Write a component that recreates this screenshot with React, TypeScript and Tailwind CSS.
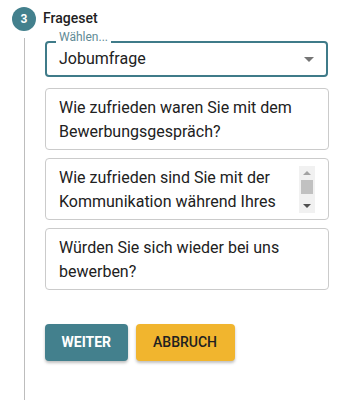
import { useState } from 'react'

const questions = [
  'Wie zufrieden waren Sie mit dem Bewerbungsgespräch?',
  'Wie zufrieden sind Sie mit der Kommunikation während Ihres Bewerbungsprozesses?',
  'Würden Sie sich wieder bei uns bewerben?',
]

// classic scrollbar look, drawn since the headless page hides real ones
function FakeScrollbar() {
  return (
    <div className="w-[16px] h-[47px] bg-[#f1f1f1] flex flex-col items-center shrink-0">
      <div className="h-[14px] flex items-center justify-center">
        <div className="w-0 h-0 border-l-[4px] border-r-[4px] border-b-[4px] border-l-transparent border-r-transparent border-b-[#a3a3a3]" />
      </div>
      <div className="w-[12px] h-[14px] bg-[#c1c1c1]" />
      <div className="flex-1" />
      <div className="h-[14px] flex items-center justify-center">
        <div className="w-0 h-0 border-l-[4px] border-r-[4px] border-t-[4px] border-l-transparent border-r-transparent border-t-[#505050]" />
      </div>
    </div>
  )
}

function QuestionCard({ text, scroll }: { text: string; scroll?: boolean }) {
  return (
    <div className="h-[62px] rounded-[4px] border border-[#cbcbcb] bg-white px-[13px] pt-[7px] pb-[5px]">
      <div className="h-[48px] flex">
        <div className="flex-1 overflow-hidden text-[16px] leading-[24px] text-[#212121]">{text}</div>
        {scroll && <FakeScrollbar />}
      </div>
    </div>
  )
}

export default function App() {
  const [set] = useState('Jobumfrage')

  return (
    <div
      className="w-[352px] h-[405px] bg-white pt-[7px] pl-[12px]"
      style={{ fontFamily: 'Roboto, "Liberation Sans", sans-serif' }}
    >
      <div className="flex items-center h-[24px]">
        <div className="w-[24px] h-[24px] rounded-full bg-[#43808d] flex items-center justify-center text-white text-[12px] font-bold leading-none">
          3
        </div>
        <span className="ml-[7px] text-[14px] leading-[20px] font-medium text-[#212121] -mt-[2px]">
          Frageset
        </span>
      </div>

      <div className="flex">
        <div className="ml-[11.5px] mt-[7px] w-px h-[362px] bg-[#bdbdbd]" />
        <div className="ml-[20.5px] w-[284px] pt-[10px]">
          <div className="relative h-[36px] w-[283px] rounded-[4px] border-2 border-[#3f7b89] px-[12px] flex items-center">
            <span className="absolute top-[-13px] left-[9px] px-[3px] bg-white text-[12px] leading-[14px] text-[#5f8b96]">
              Wählen...
            </span>
            <span className="text-[16px] leading-[24px] text-[#212121]">{set}</span>
            <div className="ml-auto w-0 h-0 border-l-[5px] border-r-[5px] border-t-[5px] border-l-transparent border-r-transparent border-t-[#757575]" />
          </div>

          <div className="mt-[11px] flex flex-col gap-2">
            {questions.map((q, i) => (
              <QuestionCard key={i} text={q} scroll={i === 1} />
            ))}
          </div>

          <div className="mt-[34px] flex gap-2">
            <button className="h-[37px] px-[16.5px] rounded-[4px] bg-[#43808d] text-white text-[14px] font-bold uppercase shadow-[0_2px_3px_rgba(0,0,0,0.25)]">
              Weiter
            </button>
            <button className="h-[37px] px-[17.5px] rounded-[4px] bg-[#f1b52e] text-[#212121] text-[14px] font-medium uppercase shadow-[0_2px_3px_rgba(0,0,0,0.25)]">
              Abbruch
            </button>
          </div>
        </div>
      </div>
    </div>
  )
}
